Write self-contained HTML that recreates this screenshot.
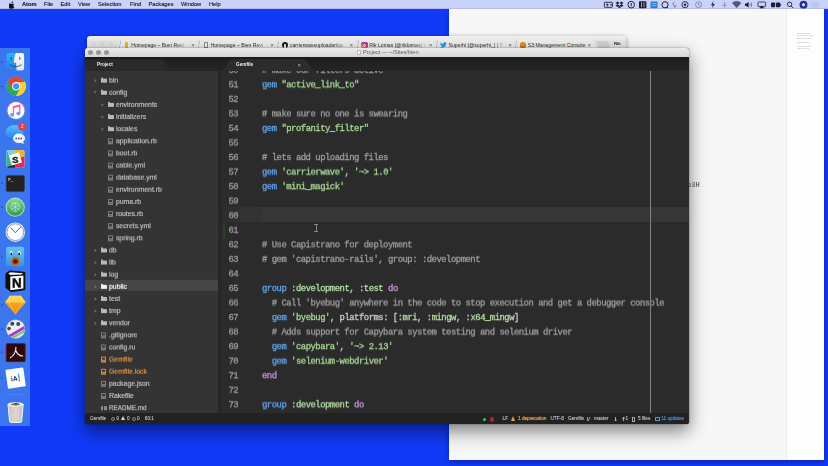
<!DOCTYPE html>
<html lang="en">
<head>
<meta charset="utf-8">
<title>Atom — Gemfile</title>
<style>
*{box-sizing:border-box;margin:0;padding:0}
html,body{width:828px;height:466px;overflow:hidden}
body{background:#103af7;position:relative;font-family:"Liberation Sans",sans-serif;color:#222}
i{display:block;position:absolute;font-style:normal}
/* menubar */
#menubar{position:absolute;left:0;top:0;width:828px;height:9.3px;background:#c9d3f9;border-bottom:0.5px solid #b3bce8}
#menubar span{position:absolute;top:0;line-height:9.3px;font-size:5.7px;color:#14141f;white-space:nowrap;-webkit-text-stroke:0.12px;filter:blur(0.25px)}
#menubar span.b{font-weight:bold}
/* white window */
#white{position:absolute;left:449px;top:9.3px;width:374.6px;height:451.2px;background:#f7f7f7;box-shadow:0 2px 6px rgba(0,0,30,.35)}
#white .side{position:absolute;left:336.8px;top:0;width:37.8px;height:100%;background:#fdfdfd;border-left:0.5px solid #ededed}
#white .mini{position:absolute;left:347.5px;top:22px;width:18px;font-size:1.6px;line-height:2.1px;color:#a4a8b0;filter:blur(0.3px);white-space:nowrap;overflow:hidden}
/* dock */
#dock{position:absolute;left:0;top:48px;width:29.5px;height:378px;background:#3c76ee}
/* chrome */
#chrome{position:absolute;left:87px;top:36.2px;width:538.5px;height:30px;background:linear-gradient(#f2f2f2,#e6e6e6 6px,#e2e2e2 12px);border-radius:3px 3px 0 0;box-shadow:0 1px 5px rgba(0,0,30,.4)}

#chrome .cl{top:5.3px;width:5px;height:5px;border-radius:50%;background:#dedede}
.ctab{position:absolute;top:2.8px;width:87.3px;height:12px;background:#efefef;clip-path:polygon(0 100%,6px 1px,8px 0,79.3px 0,81.3px 1px,87.3px 100%);font-size:5.1px;line-height:12.6px;color:#2a2a2a;white-space:nowrap;filter:blur(0.3px)}
.ctab:before{content:"";position:absolute;left:0;top:0;width:100%;height:100%;background:linear-gradient(100deg,transparent 5.3px,#c9c9c9 5.6px,#c9c9c9 6.2px,transparent 6.5px)}
.ctab .tt{position:absolute;left:16.6px;top:0;width:58.5px;overflow:hidden;-webkit-mask-image:linear-gradient(90deg,#000 45px,rgba(0,0,0,.25) 56px,transparent 58.5px)}
.ctab .cx{position:absolute;left:76.5px;top:0;font-size:5.6px;color:#555}
.fav{left:9.3px;top:3.2px;width:5.6px;height:5.8px}
.fav.y{background:#ecb52f;border-radius:.6px;width:3.8px;height:5.2px;left:10px;top:3.5px}
.fav.d{border:.55px solid #8a8a8a;background:#fafafa;border-radius:.5px;width:4.2px;height:5.4px;left:10px;top:3.4px}
.fav.g{background:#1b1b1b;border-radius:50%;width:6.2px;height:6.2px;left:9px;top:3px}
.fav.g:before{content:"";position:absolute;left:2px;top:1.6px;width:2.2px;height:4.6px;background:#efefef;border-radius:1px 1px 0 0}
.fav.i{background:linear-gradient(30deg,#f9b34a,#e23b6d 50%,#7a3fd0);border-radius:1.5px;width:6.4px;height:6.4px;left:8.8px;top:2.9px}
.fav.i:before{content:"";position:absolute;left:1.7px;top:1.7px;width:3px;height:3px;border:.6px solid #fff;border-radius:50%;box-sizing:border-box}
.fav.t{width:7px;height:6px;left:8.6px;top:3.2px}
.fav.s{background:#ea8a27;border-radius:2.6px 2.6px 2px 2px;top:3px;height:6px;width:6px;box-shadow:inset 0 -1.5px 0 #c96f18}
.newtab{left:509.5px;top:5.3px;width:11.5px;height:6.5px;background:#d2d2d2;transform:skewX(18deg);border-radius:1px}
.usr{position:absolute;left:527px;top:3.6px;font-size:4.3px;line-height:8px;color:#222;font-weight:bold;filter:blur(0.25px)}
/* atom */
#atom{position:absolute;left:85px;top:48px;width:604px;height:376px;background:#2b2b2b;border-radius:2.5px;box-shadow:0 7px 18px rgba(0,0,0,.5),0 0 2px rgba(0,0,0,.45);overflow:hidden}
#atitle{position:absolute;left:0;top:0;width:100%;height:8.8px;background:linear-gradient(#ebebeb,#d5d5d5);}
#atitle .tl{position:absolute;top:1.8px;width:5px;height:5px;border-radius:50%;background:#97979b}
#atitle .t{position:absolute;left:278px;top:0;font-size:5.6px;line-height:9px;color:#5c5c5c;white-space:nowrap;filter:blur(0.25px)}
#atitle .di{left:272px;top:1.7px;width:4px;height:5.3px;background:#fafafa;border:.4px solid #b5b5b5;border-radius:.4px}
#atabs{position:absolute;left:0;top:8.7px;width:100%;height:14.5px;background:linear-gradient(#1b1b1b,#1f1f1f 4px,#252525)}
#atabs .tab{position:absolute;top:2.6px;height:11.9px;font-size:4.7px;font-weight:bold;color:#ededed;line-height:12.2px;filter:blur(0.3px)}
#tree{position:absolute;left:0;top:23.2px;width:136.7px;height:342.8px;background:#343434;overflow:hidden;border-right:4.5px solid #272727}
.tr{position:absolute;left:0;top:0;transform-origin:0 50%;width:137px;height:12.13px;line-height:12.13px;font-size:6.9px;color:#c4c4c4;white-space:nowrap;filter:blur(0.3px);-webkit-text-stroke:0.15px}
.tr.sel{background:linear-gradient(#464646,#464646) no-repeat 0 0/100% 10.8px}
.tr.sel .fold,.tr.sel .fold:before{background:#f4f4f4}
.tr.sel span{color:#fff}
.tr span{position:absolute;top:0;transform:scaleY(1.14);transform-origin:0 24%}
.tr span.m{color:#ef9540}
.chv{top:5.7px;width:2px;height:2px;border-right:0.7px solid #777;border-bottom:0.7px solid #777;transform:rotate(-45deg)}
.chv.o{transform:rotate(45deg);top:5px}
.fold{top:4.7px;width:6px;height:4.8px;background:#b9b9b9;border-radius:0.6px}
.fold:before{content:"";position:absolute;left:0;top:-0.9px;width:2.6px;height:1.2px;background:#b9b9b9;border-radius:0.5px 0.5px 0 0}
.file{top:3.9px;width:5px;height:6.2px;border:0.6px solid #7e7e7e;border-radius:0.6px}
.file:before{content:"";position:absolute;left:0.6px;top:1.9px;width:2.6px;height:0.5px;background:#7e7e7e;box-shadow:0 1.3px 0 #7e7e7e}
.file.m{border-color:#d08a42}
.file.m:before{background:#d08a42;box-shadow:0 1.3px 0 #d08a42}
.book{top:4.6px;width:6px;height:4.8px;background:#8e8e8e;border-radius:0.5px}
.book:before{content:"";position:absolute;left:2.7px;top:0;width:0.6px;height:4.8px;background:#343434}
#editor{position:absolute;left:137.5px;top:22.6px;width:466.5px;height:343.4px;background:#2b2b2b;overflow:hidden}
.ln{position:absolute;left:0;width:466px;height:14.545px;line-height:14.545px;font-family:"Liberation Mono",monospace;font-size:8.9px;letter-spacing:-0.481px;white-space:pre;color:#c5c8c6}
.ln .no{display:inline-block;width:39px;padding-left:5.5px;color:#9b9b9b}
.ln{filter:blur(0.35px);-webkit-text-stroke:0.3px;top:0;transform-origin:0 72%}
.c{color:#9d9d9d}.k{color:#62a0e6}.s{color:#a6d594}.y{color:#b4dca6}.d{color:#c693d6}.p{color:#c8c8c8}
#cur{position:absolute;left:0;top:136.9px;width:467px;height:14.6px;background:linear-gradient(90deg,#2f2f2f 16px,#333 18px,#333 39px,#363636 39px)}
#gitm{left:0;top:153.4px;width:2px;height:14.6px;background:#31522e;opacity:.55}
#ibeam{left:93px;top:153.6px;width:0.8px;height:7.4px;background:#858585;box-shadow:-1.2px 0 0 -0.1px #2b2b2b}
#ibeam:before,#ibeam:after{content:"";position:absolute;left:-1.3px;width:3.4px;height:0.7px;background:#858585}
#ibeam:before{top:0}#ibeam:after{bottom:0}
#guide{position:absolute;left:427.8px;top:0;width:0.6px;height:344px;background:#838383}
#status{position:absolute;left:0;top:365.3px;width:604px;height:10.7px;background:#222;font-size:4.7px;color:#c8c8c8;-webkit-text-stroke:0.1px}
#status span{position:absolute;top:0;line-height:12.4px;white-space:nowrap;filter:blur(0.3px)}
#status span.o{color:#ee9a3c;-webkit-text-stroke:0.2px}#status span.bl{color:#5a95e0}#status span.ar{font-family:"DejaVu Sans",sans-serif;font-size:5px;font-weight:bold;color:#ddd}
#status .ring{top:3.6px;width:4px;height:4px;border:.6px solid #8c8c8c;border-radius:50%}
#status .tri{top:3.2px;width:0;height:0;border-left:2.5px solid transparent;border-right:2.5px solid transparent;border-bottom:4.6px solid #d8d8d8}
#status .tri.o{border-bottom-color:#ee9a3c;border-left-width:2.9px;border-right-width:2.9px;border-bottom-width:5.2px;top:2.9px}
#status .dot{top:4.4px;width:3px;height:3px;border-radius:50%}
#status .br{top:3.4px;width:2.4px;height:4.6px;border-left:.6px solid #999;border-bottom:.6px solid #999;border-radius:0 0 0 1.5px}
#status .br:before{content:"";position:absolute;left:1.2px;top:0;width:.6px;height:2.6px;background:#999;transform:rotate(30deg)}
#status .fi{top:3.3px;width:3.8px;height:5px;border:.6px solid #aaa;border-radius:.5px}
#status .pk{top:3.6px;width:4.6px;height:4.2px;border:.6px solid #5a95e0;border-radius:.5px}
</style>
</head>
<body>
<div id="white"><div class="side"></div><span style="position:absolute;left:238px;top:172px;font-family:'Liberation Mono',monospace;font-size:7px;line-height:9px;color:#7c7c7c;filter:blur(0.3px);font-weight:bold">b3H</span>
<div class="mini">---<br>title: notes on deploy<br>layout: post, date: 2017<br>categories: rails aws<br>---<br>carrierwave setup<br>&nbsp;<br>fog-aws bucket keys<br>region: eu-west-2<br>&nbsp;</div></div>
<div id="menubar">
<svg width="6" height="8" viewBox="0 0 12 15" style="position:absolute;left:9.2px;top:0.9px"><path d="M8.200 0c.1 1-.3 1.900-.9 2.600-.6.700-1.500 1.200-2.400 1.100-.1-.9.300-1.900.9-2.500.6-.7 1.600-1.200 2.400-1.200zM11.300 10.700c-.4 1-.6 1.400-1.200 2.300-.8 1.200-1.800 2-2.700 2-.9 0-1.400-.6-2.500-.6-1.200 0-1.500.6-2.500.6-1 0-1.900-.9-2.600-2-1.600-2.500-1.800-5.400-.8-6.900.7-1.100 1.900-1.800 3-1.800 1.100 0 1.800.6 2.700.6.900 0 1.400-.6 2.700-.6 1 0 2 .5 2.800 1.500-2.400 1.300-2 4.800.4 5.600z" fill="#14141f"/></svg>
<span class="b" style="left:22px">Atom</span>
<span style="left:44px">File</span>
<span style="left:60.5px">Edit</span>
<span style="left:78px">View</span>
<span style="left:98px">Selection</span>
<span style="left:130px">Find</span>
<span style="left:148.5px">Packages</span>
<span style="left:181px">Window</span>
<span style="left:209px">Help</span>
<svg width="230" height="9.5" viewBox="598 0 230 9.500" style="position:absolute;left:598px;top:0;filter:blur(0.25px)">
<g fill="none" stroke="#1e2033" stroke-width=".9">
<rect x="604.400" y="2.300" width="8" height="5" rx=".6"/><circle cx="607.400" cy="4.800" r=".7" fill="#1e2033"/><path d="M610 4.800h2.400" />
<circle cx="631.200" cy="4.700" r="3.300" stroke-width="1"/><path d="M631.200 3v3.400" stroke-width="1"/>
<circle cx="665" cy="4.800" r="3.100" stroke-width="1"/><path d="M667 7l1.200 1" />
<circle cx="685" cy="4.700" r="3.100" stroke-width=".9"/><circle cx="685" cy="4.700" r="1.200" fill="#1e2033" stroke="none"/>
<circle cx="698.600" cy="4.700" r="3" stroke="#6b6f8c" stroke-width=".7"/><path d="M698.600 3v1.900l1.300.8" stroke="#6b6f8c" stroke-width=".7"/>
<path d="M674.500 2.500c-1.800 0-2 2.500-.5 3 .5 1.500 2.500 1 2-.5M675 6v1.800" stroke="#5c6080" stroke-width=".8"/>
<path d="M724.500 2v5.500M722.300 5.200h4.400" stroke="#7a7f9e" stroke-width=".7"/>
<circle cx="789.600" cy="4.300" r="2.200" stroke-width=".9"/><path d="M791.200 6l2 2" stroke-width="1"/>
<rect x="758" y="2" width="7.600" height="4.600" rx=".5" stroke-width=".8"/>
</g>
<g fill="#1e2033">
<path d="M617.500 1.600l2 1.300-2 1.300-2-1.300zM621.500 1.600l2 1.300-2 1.300-2-1.300zM617.500 4.300l2 1.300-2 1.300-2-1.300zM621.500 4.300l2 1.300-2 1.300-2-1.300zM619.500 6l1.700 1.100-1.700 1.100-1.700-1.100z"/>
<rect x="639" y="1.200" width="7.400" height="7" rx=".7"/>
<path d="M713.600 1l-2.600 4.200h1.800l-.8 3.300 2.800-4.400h-1.800z"/>
<path d="M736.700 8l-4.700-5a6.600 6.600 0 0 1 9.400 0z" fill="#55597a"/>
<path d="M745 3.600h1.600l2-1.800v6l-2-1.800h-1.600z"/><path d="M750 3.200v3.200M751.500 2.600v4.400" stroke="#55597a" stroke-width=".6"/>
<path d="M761.800 5.200l2.400 3h-4.800z"/>
<rect x="771" y="2.400" width="4.200" height="4.800" rx=".8"/><rect x="776" y="2.400" width="4.200" height="4.800" rx=".8"/><rect x="780.300" y="3.800" width=".8" height="2"/>
</g>
<g stroke="#cfd6f5" stroke-width=".7"><path d="M641.500 2.200v5M644 2.200v5"/></g>
<rect x="650.500" y="1.400" width="7" height="6.800" rx=".6" fill="#2f79c9"/><path d="M651.500 3.600h5M651.500 5.600h5" stroke="#bfe0ff" stroke-width=".6"/>
<circle cx="803.500" cy="4.700" r="3.900" fill="#232c8c"/><circle cx="803.500" cy="4.700" r="1.700" fill="#c9d3f5"/>
<path d="M811.500 3h8M811.500 4.800h8M811.500 6.600h8" stroke="#aeb6dd" stroke-width=".7"/>
</svg>

</div>
<div id="dock"></div>
<svg id="dockicons" width="30" height="380" viewBox="0 48 30 380" style="position:absolute;left:0;top:48px;filter:blur(0.3px)">
<defs>
<linearGradient id="gFind" x1="0" x2="1"><stop offset="0" stop-color="#3fa9f5"/><stop offset="0.52" stop-color="#2f8fe8"/><stop offset="0.52" stop-color="#e4eef8"/><stop offset="1" stop-color="#cfdcea"/></linearGradient>
<linearGradient id="gFindB" x1="0" y1="0" x2="0" y2="1"><stop offset="0" stop-color="#2bb6f8"/><stop offset="1" stop-color="#2a7fe9"/></linearGradient><linearGradient id="gFindW" x1="0" y1="0" x2="0" y2="1"><stop offset="0" stop-color="#f6f8fb"/><stop offset="1" stop-color="#dfe6ef"/></linearGradient>
<linearGradient id="gGreen" x1="0" y1="0" x2="0" y2="1"><stop offset="0" stop-color="#86d694"/><stop offset="1" stop-color="#2f9b50"/></linearGradient>
<linearGradient id="gItunes" x1="0" y1="0" x2="0" y2="1"><stop offset="0" stop-color="#fb5c74"/><stop offset="0.5" stop-color="#c86dd7"/><stop offset="1" stop-color="#3fb1f0"/></linearGradient>
<linearGradient id="gMsg" x1="0" y1="0" x2="0" y2="1"><stop offset="0" stop-color="#5bc0fb"/><stop offset="1" stop-color="#1a7ef0"/></linearGradient>
<linearGradient id="gTb" x1="0" y1="0" x2="0" y2="1"><stop offset="0" stop-color="#62c6f6"/><stop offset="1" stop-color="#3694e6"/></linearGradient>
<linearGradient id="gSk" x1="0" y1="0" x2="0" y2="1"><stop offset="0" stop-color="#fdb52a"/><stop offset="1" stop-color="#f08a0a"/></linearGradient>
<linearGradient id="gTrash" x1="0" x2="1"><stop offset="0" stop-color="#cbc4bc"/><stop offset="0.5" stop-color="#dbd5ce"/><stop offset="1" stop-color="#c6bfb8"/></linearGradient>
</defs>
<!-- running dots -->
<g fill="#10163a"><circle cx="2" cy="62" r="0.55"/><circle cx="2" cy="86.5" r="0.55"/><circle cx="2" cy="183" r="0.55"/><circle cx="2" cy="207" r="0.55"/><circle cx="2" cy="257" r="0.55"/><circle cx="2" cy="305" r="0.55"/><circle cx="2" cy="329" r="0.55"/><circle cx="2" cy="352" r="0.55"/><circle cx="2" cy="378" r="0.55"/></g>
<!-- Finder -->
<rect x="6.600" y="52.900" width="17.500" height="17.500" rx="2.200" fill="url(#gFindB)"/>
<path d="M15.900 52.900h6a2.200 2.200 0 0 1 2.200 2.200v13.100a2.200 2.200 0 0 1-2.200 2.200h-5c-.6-2.300-.9-5-.7-7.700h-2.300c-.2-3 .6-6.800 2-9.800z" fill="url(#gFindW)"/>
<path d="M10 64.800c3 2.600 8.200 2.600 11.200 0" fill="none" stroke="#15396e" stroke-width=".8" stroke-linecap="round"/>
<path d="M11.200 57.400v2M19.800 57.400v2" stroke="#15396e" stroke-width=".9" stroke-linecap="round"/>
<!-- Chrome -->
<circle cx="16.2" cy="86.3" r="9.6" fill="#fff"/>
<path d="M16.2 86.3 L7.9 81.5 A9.6 9.6 0 0 1 24.5 81.5Z" fill="#e24437"/>
<path d="M16.2 86.3 L24.5 81.5 A9.6 9.6 0 0 1 16.2 95.9Z" fill="#f8cf3a"/>
<path d="M16.2 86.3 L16.2 95.9 A9.6 9.6 0 0 1 7.9 81.5Z" fill="#35a455"/>
<path d="M16.2 81.9h8.5a9.6 9.6 0 0 0-16.8-.4l3.9 6.6z" fill="#e24437"/>
<path d="M20 88.5l-4.3 7.4a9.6 9.6 0 0 0 9-14h-7.6z" fill="#f8cf3a"/>
<path d="M12.4 88.5l-4.5-7a9.6 9.6 0 0 0 7.9 14.4l3.9-6.6z" fill="#35a455"/>
<circle cx="16.2" cy="86.3" r="4.200" fill="#f4f7fb"/><circle cx="16.2" cy="86.3" r="3.100" fill="#4a8ff0"/>
<!-- iTunes -->
<circle cx="16" cy="110.400" r="9.600" fill="url(#gItunes)" opacity=".55"/><circle cx="16" cy="110.400" r="8.500" fill="#fbfaff"/>
<path d="M12.800 106.200l7.600-1.900v9.200a2 1.700 0 1 1-1.300-1.600v-5.200l-5 1.200v7a2 1.700 0 1 1-1.300-1.600z" fill="url(#gItunes)"/>
<!-- Messages -->
<ellipse cx="14.5" cy="132.5" rx="9" ry="7.6" fill="url(#gMsg)"/><path d="M8 137l-1.5 3.5 4.500-1.500z" fill="#1a7ef0"/>
<ellipse cx="19" cy="138.3" rx="6" ry="4.800" fill="#f2f6fc"/><path d="M22.500 141.500l2 2.300-4-.8z" fill="#f2f6fc"/>
<g fill="#4d5d7c"><circle cx="16.300" cy="138.500" r=".95"/><circle cx="18.800" cy="138.500" r=".95"/><circle cx="21.300" cy="138.500" r=".95"/></g>
<circle cx="22.300" cy="126.600" r="4" fill="#f0363f"/><text x="22.300" y="128.200" font-family="Liberation Sans,sans-serif" font-size="4.600" fill="#fff" text-anchor="middle">2</text>
<!-- Slack -->
<clipPath id="cSl"><rect x="6.500" y="150" width="17.900" height="17.800" rx="1.800"/></clipPath>
<g clip-path="url(#cSl)"><g transform="rotate(-17 15.400 158.900)">
<rect x="0" y="140" width="32" height="38" fill="#fbfbfb"/>
<rect x="0" y="140" width="10.100" height="38" fill="#35b58c"/>
<rect x="10.100" y="140" width="6.500" height="13.600" fill="#7ccfe6"/>
<rect x="16.600" y="140" width="16" height="13.600" fill="#ecb22e"/>
<rect x="20.700" y="153.600" width="12" height="5.500" fill="#ecb22e"/>
<rect x="20.700" y="159.100" width="12" height="20" fill="#df2a55"/>
<rect x="13" y="164.200" width="8" height="14" fill="#df2a55"/>
<rect x="0" y="164.200" width="13" height="14" fill="#2e1433"/>
</g></g>
<text x="15.300" y="162.500" font-family="Liberation Sans,sans-serif" font-size="9.800" font-weight="bold" fill="#16161a" stroke="#16161a" stroke-width=".3" text-anchor="middle">S</text>
<!-- Terminal -->
<rect x="6.200" y="175.400" width="18.200" height="16.200" rx="1.600" fill="#222224" stroke="#3b3d42" stroke-width=".6"/>
<text x="7.700" y="181.400" font-family="Liberation Mono,monospace" font-size="4.800" font-weight="bold" fill="#f0f0f0">&gt;_</text>
<!-- green globe app -->
<circle cx="15.200" cy="207.200" r="9.600" fill="#a9e2b3"/><circle cx="15.200" cy="207.200" r="8.600" fill="url(#gGreen)"/>
<g fill="none" stroke="#c9f0cd" stroke-width=".8" opacity=".85"><circle cx="15.200" cy="207" r="4.200"/><path d="M15.200 202.400v9.200M11.400 204.600l7.600 5M19 204.600l-7.600 5M12.400 202.800c1.800 1 3.800 1 5.600 0"/></g>
<!-- clock -->
<circle cx="15.300" cy="232.200" r="9.700" fill="#e9f1fb"/><circle cx="15.300" cy="232.200" r="8.400" fill="#fdfeff" stroke="#66748e" stroke-width=".7"/>
<path d="M10.600 227.600l4.800 5 5.300-5.500" fill="none" stroke="#59626f" stroke-width="1"/>
<!-- Tweetbot -->
<rect x="6.100" y="246.800" width="18" height="19.500" rx="2.200" fill="url(#gTb)"/>
<ellipse cx="11.200" cy="253.400" rx="1.500" ry="2.300" fill="#eaf6fd"/><ellipse cx="19.200" cy="253.400" rx="1.500" ry="2.300" fill="#eaf6fd"/>
<ellipse cx="11.300" cy="254" rx="1" ry="1.500" fill="#0f1820"/><ellipse cx="19.100" cy="254" rx="1" ry="1.500" fill="#0f1820"/>
<circle cx="15.300" cy="261.300" r="4.600" fill="#d9781c"/><circle cx="15.300" cy="261.300" r="3.700" fill="#b85a12"/><circle cx="15.400" cy="261.500" r="2.300" fill="#4a1c08"/>
<!-- Notion -->
<path d="M5.900 273.600L9.800 270.900 24.900 272.300V289.700L11 291.700 5.900 287.700z" fill="#0e0e0e" stroke="#0e0e0e" stroke-width=".8" stroke-linejoin="round"/>
<path d="M8.400 273.500l1.900-1.300 12.800 1.100-1.700 1.100-11.300.6z" fill="#f6f6f6"/>
<path d="M10.300 276.500l13.100-1v13.100l-13.100 1.700z" fill="#fbfbfb"/>
<text x="16.800" y="287.600" font-family="Liberation Sans,sans-serif" font-size="13.400" font-weight="bold" fill="#0e0e0e" stroke="#0e0e0e" stroke-width=".5" text-anchor="middle" transform="skewY(-3)" style="transform-origin:16.800px 282px">N</text>
<!-- Sketch -->
<path d="M4.900 302.400l5-6.700h11l5 6.700-10.500 11.900z" fill="url(#gSk)"/>
<path d="M4.900 302.400l5-6.700h11l5 6.700z" fill="#fdd24e"/>
<path d="M9.900 295.700l-1 6.700 6.500 11.900 6.600-11.900-1.100-6.700M15.400 295.700l-6.500 6.700M15.400 295.700l6.600 6.700" fill="none" stroke="#fde08a" stroke-width=".5" opacity=".8"/>
<!-- round movie app -->
<clipPath id="cMv"><circle cx="15.600" cy="329" r="9.400"/></clipPath>
<circle cx="15.600" cy="329" r="9.600" fill="#c9ccd6"/><circle cx="15.600" cy="329" r="8.800" fill="#eceef3"/>
<g fill="#45464f"><circle cx="12.300" cy="323.800" r="2"/><circle cx="18.200" cy="324" r="2"/><circle cx="9" cy="328.600" r="1.800"/></g>
<g clip-path="url(#cMv)"><path d="M6 336.400l18-10.400 1.400 2.600-18 10.400z" fill="#a63cc8"/><path d="M7.600 339.400l18-10.400 1 2-18 10.400z" fill="#79c67a"/><path d="M8.800 341.600l18-10.400 1 2-18 10.400z" fill="#d9dce4"/></g>
<!-- Acrobat -->
<rect x="6.200" y="343.500" width="19" height="18.200" rx="1.200" fill="#2c080b" stroke="#701820" stroke-width=".8"/>
<path d="M15.900 347.400c.3 4.200-2.300 8.600-5.600 10.400M15.700 350.200c1.200 3.400 3.400 5.400 6.600 5.800M20.400 355.800h2.200" fill="none" stroke="#efe4e4" stroke-width="1.150" stroke-linecap="round"/>
<!-- UA doc -->
<g transform="rotate(-8 15.600 378)"><rect x="6.600" y="368.600" width="18" height="19" rx=".8" fill="#fbfcfd"/>
<text x="14.200" y="380.800" font-family="Liberation Sans,sans-serif" font-size="6.800" font-weight="bold" fill="#1b2430" text-anchor="middle" textLength="6.500" lengthAdjust="spacingAndGlyphs">iA</text>
<rect x="18.400" y="374" width="1.200" height="8" fill="#25b7c4"/></g>
<!-- separator -->
<rect x="6.400" y="394.300" width="19.400" height=".6" fill="#8fb0f5" opacity=".4"/>
<!-- Trash -->
<path d="M8 404.400h15.200l-1.500 16.500a1.600 1.600 0 0 1-1.600 1.500h-9a1.600 1.600 0 0 1-1.600-1.500z" fill="url(#gTrash)" stroke="#f3f3f6" stroke-width="1" stroke-linejoin="round"/>
<ellipse cx="15.600" cy="404.400" rx="7.600" ry="1.900" fill="#e9e9ec" stroke="#f3f3f6" stroke-width=".6"/>
<path d="M10.600 404.600c1.200-1.600 2.600-.4 3.800-1.300 1.500-1 3.600-.6 5.600 1.200-2.800 1.200-6.600 1.200-9.400.1z" fill="#55524f"/>
<path d="M13 403.700l1.600.7M16.800 403.400l1.300 1" stroke="#c9c5c0" stroke-width=".5"/>
<path d="M12.600 408l.6 12M15.600 408v12M18.600 408l-.6 12" stroke="#e3ded8" stroke-width=".5" opacity=".7"/>
</svg>

<div id="chrome">
<i class="cl" style="left:4.3px"></i><i class="cl" style="left:12.6px"></i><i class="cl" style="left:20.9px"></i>
<div class="ctab" style="left:27.7px"><i class="fav y"></i><span class="tt">Homepage – Bien Revi</span><span class="cx">×</span></div>
<div class="ctab" style="left:107.0px"><i class="fav d"></i><span class="tt">Homepage – Bien Revi</span><span class="cx">×</span></div>
<div class="ctab" style="left:186.3px"><i class="fav g"></i><span class="tt">carrierwaveuploader/ca</span><span class="cx">×</span></div>
<div class="ctab" style="left:265.6px"><i class="fav i"></i><span class="tt">Rik Lomas (@riklomas) •</span><span class="cx">×</span></div>
<div class="ctab" style="left:344.9px"><i class="fav t"><svg width="7" height="6" viewBox="0 0 24 20" style="display:block"><path d="M23.600 2.400c-.9.400-1.800.600-2.800.800 1-.6 1.800-1.600 2.100-2.700-.9.600-2 1-3.100 1.200a4.800 4.800 0 0 0-8.300 4.400C7.500 5.900 4 4 1.600 1.100a4.800 4.800 0 0 0 1.500 6.500c-.8 0-1.500-.2-2.200-.6 0 2.400 1.700 4.400 3.900 4.800-.7.200-1.500.2-2.200.1a4.800 4.800 0 0 0 4.500 3.400A9.700 9.700 0 0 1 0 17.300 13.700 13.700 0 0 0 7.400 19.500c9 0 13.900-7.400 13.900-13.900v-.6c1-.7 1.800-1.600 2.300-2.600z" fill="#2ba1ee"/></svg></i><span class="tt">Superhi (@superhi_) | T</span><span class="cx">×</span></div>
<div class="ctab" style="left:424.2px"><i class="fav s"></i><span class="tt" style="-webkit-mask-image:none;width:62px">S3 Management Console</span><span class="cx">×</span></div>
<i class="newtab"></i><span class="usr">Rik</span>
</div>
<div id="atom">
 <div id="atitle"><i class="tl" style="left:3px"></i><i class="tl" style="left:11.2px"></i><i class="tl" style="left:19.2px"></i><i class="di"></i><span class="t">Project — ~/Sites/bien</span></div>
 <div id="atabs">
  <div class="tab" style="left:0;width:88px;background:linear-gradient(90deg,#2a2a2a 70px,#252525);padding-left:12px;clip-path:polygon(0 0,76px 0,80px 2px,88px 100%,0 100%)">Project</div>
  <div class="tab" style="left:138px;width:90px;background:#2c2c2c;padding-left:13px;clip-path:polygon(0 100%,6px 2px,9px 0,81px 0,84px 2px,90px 100%)">Gemfile<span style="position:absolute;left:74.5px;top:0;font-weight:normal;color:#b5b5b5;font-size:6px">×</span></div>
 </div>
 <div id="tree">
<div class="tr" style="transform:translateY(2.64px) rotate(0.01deg)"><i class="chv" style="left:9.0px"></i><i class="fold" style="left:15.6px"></i><span class="" style="left:24.0px">bin</span></div>
<div class="tr" style="transform:translateY(14.77px) rotate(0.01deg)"><i class="chv o" style="left:8.5px"></i><i class="fold" style="left:15.6px"></i><span class="" style="left:24.0px">config</span></div>
<div class="tr" style="transform:translateY(26.90px) rotate(0.01deg)"><i class="chv" style="left:15.9px"></i><i class="fold" style="left:22.5px"></i><span class="" style="left:30.9px">environments</span></div>
<div class="tr" style="transform:translateY(39.03px) rotate(0.01deg)"><i class="chv" style="left:15.9px"></i><i class="fold" style="left:22.5px"></i><span class="" style="left:30.9px">initializers</span></div>
<div class="tr" style="transform:translateY(51.16px) rotate(0.01deg)"><i class="chv" style="left:15.9px"></i><i class="fold" style="left:22.5px"></i><span class="" style="left:30.9px">locales</span></div>
<div class="tr" style="transform:translateY(63.29px) rotate(0.01deg)"><i class="file" style="left:22.8px"></i><span class="" style="left:30.9px">application.rb</span></div>
<div class="tr" style="transform:translateY(75.42px) rotate(0.01deg)"><i class="file" style="left:22.8px"></i><span class="" style="left:30.9px">boot.rb</span></div>
<div class="tr" style="transform:translateY(87.55px) rotate(0.01deg)"><i class="file" style="left:22.8px"></i><span class="" style="left:30.9px">cable.yml</span></div>
<div class="tr" style="transform:translateY(99.67px) rotate(0.01deg)"><i class="file" style="left:22.8px"></i><span class="" style="left:30.9px">database.yml</span></div>
<div class="tr" style="transform:translateY(111.80px) rotate(0.01deg)"><i class="file" style="left:22.8px"></i><span class="" style="left:30.9px">environment.rb</span></div>
<div class="tr" style="transform:translateY(123.94px) rotate(0.01deg)"><i class="file" style="left:22.8px"></i><span class="" style="left:30.9px">puma.rb</span></div>
<div class="tr" style="transform:translateY(136.06px) rotate(0.01deg)"><i class="file" style="left:22.8px"></i><span class="" style="left:30.9px">routes.rb</span></div>
<div class="tr" style="transform:translateY(148.19px) rotate(0.01deg)"><i class="file" style="left:22.8px"></i><span class="" style="left:30.9px">secrets.yml</span></div>
<div class="tr" style="transform:translateY(160.32px) rotate(0.01deg)"><i class="file" style="left:22.8px"></i><span class="" style="left:30.9px">spring.rb</span></div>
<div class="tr" style="transform:translateY(172.46px) rotate(0.01deg)"><i class="chv" style="left:9.0px"></i><i class="fold" style="left:15.6px"></i><span class="" style="left:24.0px">db</span></div>
<div class="tr" style="transform:translateY(184.59px) rotate(0.01deg)"><i class="chv" style="left:9.0px"></i><i class="fold" style="left:15.6px"></i><span class="" style="left:24.0px">lib</span></div>
<div class="tr" style="transform:translateY(196.72px) rotate(0.01deg)"><i class="chv" style="left:9.0px"></i><i class="fold" style="left:15.6px"></i><span class="" style="left:24.0px">log</span></div>
<div class="tr sel" style="transform:translateY(208.85px) rotate(0.01deg)"><i class="chv" style="left:9.0px"></i><i class="fold" style="left:15.6px"></i><span class="" style="left:24.0px">public</span></div>
<div class="tr" style="transform:translateY(220.98px) rotate(0.01deg)"><i class="chv" style="left:9.0px"></i><i class="fold" style="left:15.6px"></i><span class="" style="left:24.0px">test</span></div>
<div class="tr" style="transform:translateY(233.11px) rotate(0.01deg)"><i class="chv" style="left:9.0px"></i><i class="fold" style="left:15.6px"></i><span class="" style="left:24.0px">tmp</span></div>
<div class="tr" style="transform:translateY(245.24px) rotate(0.01deg)"><i class="chv" style="left:9.0px"></i><i class="fold" style="left:15.6px"></i><span class="" style="left:24.0px">vendor</span></div>
<div class="tr" style="transform:translateY(257.37px) rotate(0.01deg)"><i class="file" style="left:15.9px"></i><span class="" style="left:24.0px">.gitignore</span></div>
<div class="tr" style="transform:translateY(269.50px) rotate(0.01deg)"><i class="file" style="left:15.9px"></i><span class="" style="left:24.0px">config.ru</span></div>
<div class="tr" style="transform:translateY(281.62px) rotate(0.01deg)"><i class="file m" style="left:15.9px"></i><span class="m" style="left:24.0px">Gemfile</span></div>
<div class="tr" style="transform:translateY(293.75px) rotate(0.01deg)"><i class="file m" style="left:15.9px"></i><span class="m" style="left:24.0px">Gemfile.lock</span></div>
<div class="tr" style="transform:translateY(305.88px) rotate(0.01deg)"><i class="file" style="left:15.9px"></i><span class="" style="left:24.0px">package.json</span></div>
<div class="tr" style="transform:translateY(318.01px) rotate(0.01deg)"><i class="file" style="left:15.9px"></i><span class="" style="left:24.0px">Rakefile</span></div>
<div class="tr" style="transform:translateY(330.15px) rotate(0.01deg)"><i class="book" style="left:15.6px"></i><span class="" style="left:24.0px;font-size:6.3px;transform:scaleY(1.25)">README.md</span></div>

 </div>
 <div id="editor">
  <div id="cur"></div><i id="gitm"></i>
<div class="ln" style="transform:translateY(-7.59px) scaleY(1.06) rotate(0.01deg)"><span class="no">50</span><span class="c"># make our filters active</span></div>
<div class="ln" style="transform:translateY(6.95px) scaleY(1.06) rotate(0.01deg)"><span class="no">51</span><span class="k">gem</span><span class="p"> </span><span class="s">&quot;active_link_to&quot;</span></div>
<div class="ln" style="transform:translateY(21.50px) scaleY(1.06) rotate(0.01deg)"><span class="no">52</span></div>
<div class="ln" style="transform:translateY(36.04px) scaleY(1.06) rotate(0.01deg)"><span class="no">53</span><span class="c"># make sure no one is swearing</span></div>
<div class="ln" style="transform:translateY(50.59px) scaleY(1.06) rotate(0.01deg)"><span class="no">54</span><span class="k">gem</span><span class="p"> </span><span class="s">&quot;profanity_filter&quot;</span></div>
<div class="ln" style="transform:translateY(65.13px) scaleY(1.06) rotate(0.01deg)"><span class="no">55</span></div>
<div class="ln" style="transform:translateY(79.67px) scaleY(1.06) rotate(0.01deg)"><span class="no">56</span><span class="c"># lets add uploading files</span></div>
<div class="ln" style="transform:translateY(94.22px) scaleY(1.06) rotate(0.01deg)"><span class="no">57</span><span class="k">gem</span><span class="p"> </span><span class="s">&#x27;carrierwave&#x27;</span><span class="p">, </span><span class="s">&#x27;~&gt; 1.0&#x27;</span></div>
<div class="ln" style="transform:translateY(108.77px) scaleY(1.06) rotate(0.01deg)"><span class="no">58</span><span class="k">gem</span><span class="p"> </span><span class="s">&#x27;mini_magick&#x27;</span></div>
<div class="ln" style="transform:translateY(123.31px) scaleY(1.06) rotate(0.01deg)"><span class="no">59</span></div>
<div class="ln" style="transform:translateY(137.85px) scaleY(1.06) rotate(0.01deg)"><span class="no">60</span></div>
<div class="ln" style="transform:translateY(152.40px) scaleY(1.06) rotate(0.01deg)"><span class="no">61</span></div>
<div class="ln" style="transform:translateY(166.94px) scaleY(1.06) rotate(0.01deg)"><span class="no">62</span><span class="c"># Use Capistrano for deployment</span></div>
<div class="ln" style="transform:translateY(181.49px) scaleY(1.06) rotate(0.01deg)"><span class="no">63</span><span class="c"># gem &#x27;capistrano-rails&#x27;, group: :development</span></div>
<div class="ln" style="transform:translateY(196.03px) scaleY(1.06) rotate(0.01deg)"><span class="no">64</span></div>
<div class="ln" style="transform:translateY(210.58px) scaleY(1.06) rotate(0.01deg)"><span class="no">65</span><span class="k">group</span><span class="p"> </span><span class="y">:development</span><span class="p">, </span><span class="y">:test</span><span class="p"> </span><span class="d">do</span></div>
<div class="ln" style="transform:translateY(225.12px) scaleY(1.06) rotate(0.01deg)"><span class="no">66</span><span class="c">  # Call &#x27;byebug&#x27; anywhere in the code to stop execution and get a debugger console</span></div>
<div class="ln" style="transform:translateY(239.67px) scaleY(1.06) rotate(0.01deg)"><span class="no">67</span><span class="p">  </span><span class="k">gem</span><span class="p"> </span><span class="s">&#x27;byebug&#x27;</span><span class="p">, platforms: [</span><span class="y">:mri</span><span class="p">, </span><span class="y">:mingw</span><span class="p">, </span><span class="y">:x64_mingw</span><span class="p">]</span></div>
<div class="ln" style="transform:translateY(254.21px) scaleY(1.06) rotate(0.01deg)"><span class="no">68</span><span class="c">  # Adds support for Capybara system testing and selenium driver</span></div>
<div class="ln" style="transform:translateY(268.76px) scaleY(1.06) rotate(0.01deg)"><span class="no">69</span><span class="p">  </span><span class="k">gem</span><span class="p"> </span><span class="s">&#x27;capybara&#x27;</span><span class="p">, </span><span class="s">&#x27;~&gt; 2.13&#x27;</span></div>
<div class="ln" style="transform:translateY(283.31px) scaleY(1.06) rotate(0.01deg)"><span class="no">70</span><span class="p">  </span><span class="k">gem</span><span class="p"> </span><span class="s">&#x27;selenium-webdriver&#x27;</span></div>
<div class="ln" style="transform:translateY(297.85px) scaleY(1.06) rotate(0.01deg)"><span class="no">71</span><span class="d">end</span></div>
<div class="ln" style="transform:translateY(312.39px) scaleY(1.06) rotate(0.01deg)"><span class="no">72</span></div>
<div class="ln" style="transform:translateY(326.94px) scaleY(1.06) rotate(0.01deg)"><span class="no">73</span><span class="k">group</span><span class="p"> </span><span class="y">:development</span><span class="p"> </span><span class="d">do</span></div>

  <div id="guide"></div>
  <i id="ibeam"></i>
 </div>
 <div id="status">
<span style="left:5.0px">Gemfile</span><i class="ring" style="left:26px"></i><span style="left:31.6px">0</span><i class="tri" style="left:36.3px"></i><span style="left:42.0px">0</span><i class="ring" style="left:46.599999999999994px"></i><span style="left:52.0px">0</span><span style="left:59.8px">60:1</span><i class="dot" style="left:397.8px;background:#3fc56b"></i><i class="dot" style="left:405px;background:#b8222a;width:4.2px;height:4.6px;top:3.8px;border-radius:45%"></i><span style="left:417.6px">LF</span><i class="tri o" style="left:425.5px"></i><span class="o" style="left:433.0px">1 deprecation</span><span style="left:465.5px">UTF-8</span><span style="left:483.0px">Gemfile</span><i class="br" style="left:502px"></i><span style="left:509.0px">master</span><span class="ar" style="left:528.6px">↓</span><span class="ar" style="left:536.4px">↑</span><span style="left:540.6px">1</span><i class="fi" style="left:546.6px"></i><span style="left:553.0px">5 files</span><i class="pk" style="left:570px"></i><span class="bl" style="left:576.3px">11 updates</span>
 </div>
</div>
</body>
</html>
